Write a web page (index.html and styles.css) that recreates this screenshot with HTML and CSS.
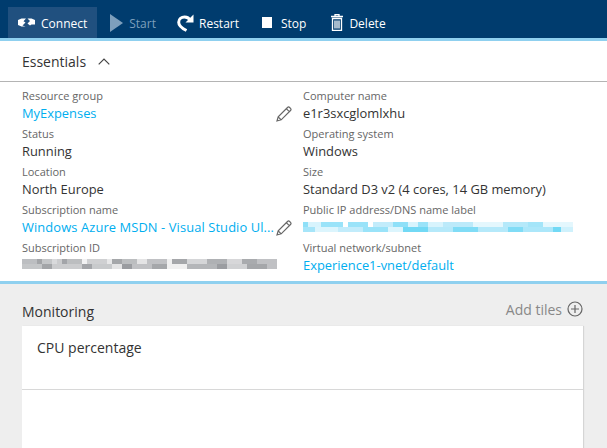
FILE: index.html

```html
<!DOCTYPE html>
<html lang="en">
<head>
  <meta charset="UTF-8">
  <title>Virtual machine</title>
  <link rel="stylesheet" href="styles.css">
</head>
<body>
  <div class="toolbar">
    <div class="cmd cmd-active">
      <svg class="ico ico-connect" viewBox="0 0 17 9"><path d="M0 2 3.500.5H8L5.500 3.200 7.500 4.500 4.500 7.500 7.500 8.500H3.500L0 7zM17 2 13.500.5H9.500L12 3 9.500 5.500l2.500 2 1.500-1H17z" fill="#fff"/></svg>
      <span>Connect</span>
    </div>
    <div class="cmd cmd-off">
      <svg class="ico ico-start" viewBox="0 0 13 18"><path d="M0 0 13 9 0 18z" fill="#7d9fbc"/></svg>
      <span>Start</span>
    </div>
    <div class="cmd cmd-restart">
      <svg class="ico ico-restart" viewBox="0 0 17 18"><path d="M9.500 16.500C5.500 14.500 1.700 12 1.700 8.200 1.700 5 4.500 3 7.500 3c2.700 0 4.700 1.200 5.700 3.500" fill="none" stroke="#fff" stroke-width="3"/><path d="M16.500.5v8H8.500z" fill="#fff"/></svg>
      <span>Restart</span>
    </div>
    <div class="cmd cmd-stop">
      <div class="ico-stop"></div>
      <span>Stop</span>
    </div>
    <div class="cmd">
      <svg class="ico ico-delete" viewBox="0 0 12 17"><path d="M0 2.500h12M4 2.500V.7h4v1.800M1.500 4.500h9v12h-9zM4 6.500v8M6 6.500v8M8 6.500v8" fill="none" stroke="#fff" stroke-width="1.300"/></svg>
      <span>Delete</span>
    </div>
  </div>

  <div class="essentials">
    <div class="ess-head">
      <span>Essentials</span>
      <svg class="chevron" viewBox="0 0 12 7"><path d="M.7 6.300 6 1l5.300 5.300" fill="none" stroke="#444" stroke-width="1.200"/></svg>
    </div>
    <div class="ess-grid">
      <div class="field">
        <div class="lbl">Resource group</div>
        <div class="val val-edit"><a class="link">MyExpenses</a>
          <svg class="pencil" viewBox="0 0 16 16"><path d="M1 15 2.200 10.800 11.500 1.500a1.500 1.500 0 0 1 2.100 0l.9.900a1.500 1.500 0 0 1 0 2.100L5.200 13.800zM2.200 10.800l3 3M10.300 2.700l3 3" fill="none" stroke="#666" stroke-width="1.200"/></svg>
        </div>
      </div>
      <div class="field">
        <div class="lbl">Computer name</div>
        <div class="val">e1r3sxcglomlxhu</div>
      </div>
      <div class="field">
        <div class="lbl">Status</div>
        <div class="val">Running</div>
      </div>
      <div class="field">
        <div class="lbl">Operating system</div>
        <div class="val">Windows</div>
      </div>
      <div class="field">
        <div class="lbl">Location</div>
        <div class="val">North Europe</div>
      </div>
      <div class="field">
        <div class="lbl">Size</div>
        <div class="val">Standard D3 v2 (4 cores, 14 GB memory)</div>
      </div>
      <div class="field">
        <div class="lbl">Subscription name</div>
        <div class="val val-edit"><a class="link link-long">Windows Azure MSDN - Visual Studio Ul...</a>
          <svg class="pencil" viewBox="0 0 16 16"><path d="M1 15 2.200 10.800 11.500 1.500a1.500 1.500 0 0 1 2.100 0l.9.900a1.500 1.500 0 0 1 0 2.100L5.200 13.800zM2.200 10.800l3 3M10.300 2.700l3 3" fill="none" stroke="#666" stroke-width="1.200"/></svg>
        </div>
      </div>
      <div class="field">
        <div class="lbl">Public IP address/DNS name label</div>
        <div class="val"><div class="blur blur-blue"></div></div>
      </div>
      <div class="field">
        <div class="lbl">Subscription ID</div>
        <div class="val"><div class="blur blur-grey"></div></div>
      </div>
      <div class="field">
        <div class="lbl">Virtual network/subnet</div>
        <div class="val"><a class="link">Experience1-vnet/default</a></div>
      </div>
    </div>
  </div>

  <div class="monitoring">
    <div class="mon-head">
      <span class="mon-title">Monitoring</span>
      <span class="add-tiles">Add tiles
        <svg class="plus" viewBox="0 0 16 16"><circle cx="8" cy="8" r="7" fill="none" stroke="#666" stroke-width="1.200"/><path d="M8 4v8M4 8h8" stroke="#666" stroke-width="1.200"/></svg>
      </span>
    </div>
    <div class="card">
      <div class="card-title">CPU percentage</div>
      <div class="card-body"></div>
    </div>
  </div>
</body>
</html>
```

FILE: styles.css

```css
html, body { margin: 0; height: 100%; overflow: hidden; }
body { font-family: "Open Sans", Arial, sans-serif; font-size: 13px; color: #333; background: #eee; }

.toolbar {
  display: flex; height: 38px; padding-left: 8px; background: #003c6e;
  border-bottom: 3px solid #8fd0ef; align-items: flex-end; color: #fff;
}
.cmd { display: flex; align-items: center; height: 31px; padding: 0 10px; gap: 6px; margin-right: 3px; font-size: 12px; }
.cmd span { padding-top: 1px; }
.cmd-active { background: #20507f; }
.cmd-off { color: #7d9fbc; margin-right: 1px; }
.cmd-restart { gap: 5px; }
.cmd-stop { margin-right: 5px; }
.ico-connect { width: 17px; height: 9px; }
.ico-start { width: 13px; height: 18px; }
.ico-restart { width: 17px; height: 18px; }
.ico-delete { width: 12px; height: 17px; }
.ico-stop { width: 10px; height: 11px; background: #fff; margin-right: 3px; }

.essentials { background: #fff; height: 240px; border-bottom: 3px solid #8fd0ef; }
.ess-head {
  display: flex; align-items: center; gap: 12px; height: 40px; padding-left: 22px;
  border-bottom: 1px solid #b4b4b4; font-size: 14px;
}
.chevron { width: 12px; height: 7px; }

.ess-grid { display: grid; grid-template-columns: 281px 1fr; padding: 4px 0 0 22px; }
.field { height: 38px; }
.lbl { height: 18px; line-height: 19px; font-size: 11px; color: #666; }
.val { height: 20px; line-height: 19px; font-size: 12.9px; color: #333; white-space: nowrap; }
.val-edit { display: flex; align-items: center; justify-content: space-between; width: 270px; height: 19px; }
.link { color: #00aeef; }
.link-long { letter-spacing: .1px; }
.pencil { width: 16px; height: 16px; flex: none; }

/* redacted values, drawn as pixel cells */
.blur { height: 10px; margin-top: 4px; }
.blur-grey {
  width: 255px; margin-top: 3px;
  background:
    linear-gradient(90deg, #bcbec1 0 15px, #a3a5a8 15px 20px, #c4c6c8 20px 30px, #d9dadc 30px 35px, #cbccce 35px 40px, #a3a5a9 40px 45px, #bcbec0 45px 60px, #f2f2f3 60px 65px, #cfd0d2 65px 85px, #e8e8e9 85px 90px, #a5a7aa 90px 100px, #bcbec0 100px 115px, #e4e4e5 115px 125px, #c0c1c4 125px 145px, #f0f0f0 145px 150px, #a5a7aa 150px 165px, #d5d6d8 165px 185px, #afb1b4 185px 205px, #d7d7d9 205px 220px, #a9abae 220px 235px, #c0c1c4 235px 255px) top / 100% 5px no-repeat,
    linear-gradient(90deg, #c4c6c8 0 20px, #a3a5a8 20px 30px, #cbccce 30px 60px, #a3a5a9 60px 70px, #c8cacc 70px 90px, #e4e4e5 90px 100px, #9a9ca0 100px 110px, #c0c1c4 110px 130px, #a5a7aa 130px 145px, #f0f0f0 145px 165px, #b4b6b9 165px 195px, #9b9da1 195px 205px, #d0d1d3 205px 225px, #a5a7aa 225px 245px, #c0c1c4 245px 255px) bottom / 100% 5px no-repeat;
}
.blur-blue {
  width: 270px;
  background:
    linear-gradient(90deg, #8fe0f8 0 5px, #d8f4fd 5px 18px, #9ae3f9 18px 40px, #fff 40px 45px, #9ae3f9 45px 65px, #fff 65px 70px, #c2ecfb 70px 90px, #8fe0f8 90px 105px, #d8f4fd 105px 115px, #9ae3f9 115px 125px, #d8f4fd 125px 140px, #bceafa 140px 170px, #e4f7fd 170px 200px, #b5e9fa 200px 225px, #a4e5f9 225px 240px, #e4f7fd 240px 270px) top / 100% 5px no-repeat,
    linear-gradient(90deg, #a6e5f9 0 12px, #dcf5fd 12px 35px, #c2ecfb 35px 60px, #9ae3f9 60px 85px, #dcf5fd 85px 100px, #72d9f5 100px 125px, #b5e9fa 125px 150px, #80dcf6 150px 175px, #b5e9fa 175px 205px, #80dcf6 205px 220px, #ace7fa 220px 250px, #72d9f5 250px 258px, #cff1fc 258px 270px) bottom / 100% 5px no-repeat;
}

.monitoring { padding: 0 24px 0 22px; }
.mon-head { display: flex; justify-content: space-between; align-items: center; height: 42px; font-size: 14px; padding-top: 8px; box-sizing: border-box; }
.mon-title { margin-top: 5px; }
.add-tiles { display: flex; align-items: center; gap: 5px; color: #888; }
.plus { width: 16px; height: 16px; }

.card { background: #fff; box-shadow: 1px 0 1px rgba(0,0,0,0.1); }
.card-title { height: 64px; padding: 12px 15px 0; box-sizing: border-box; border-bottom: 1px solid #d8d8d8; font-size: 14px; }
.card-body { height: 58px; }
```
